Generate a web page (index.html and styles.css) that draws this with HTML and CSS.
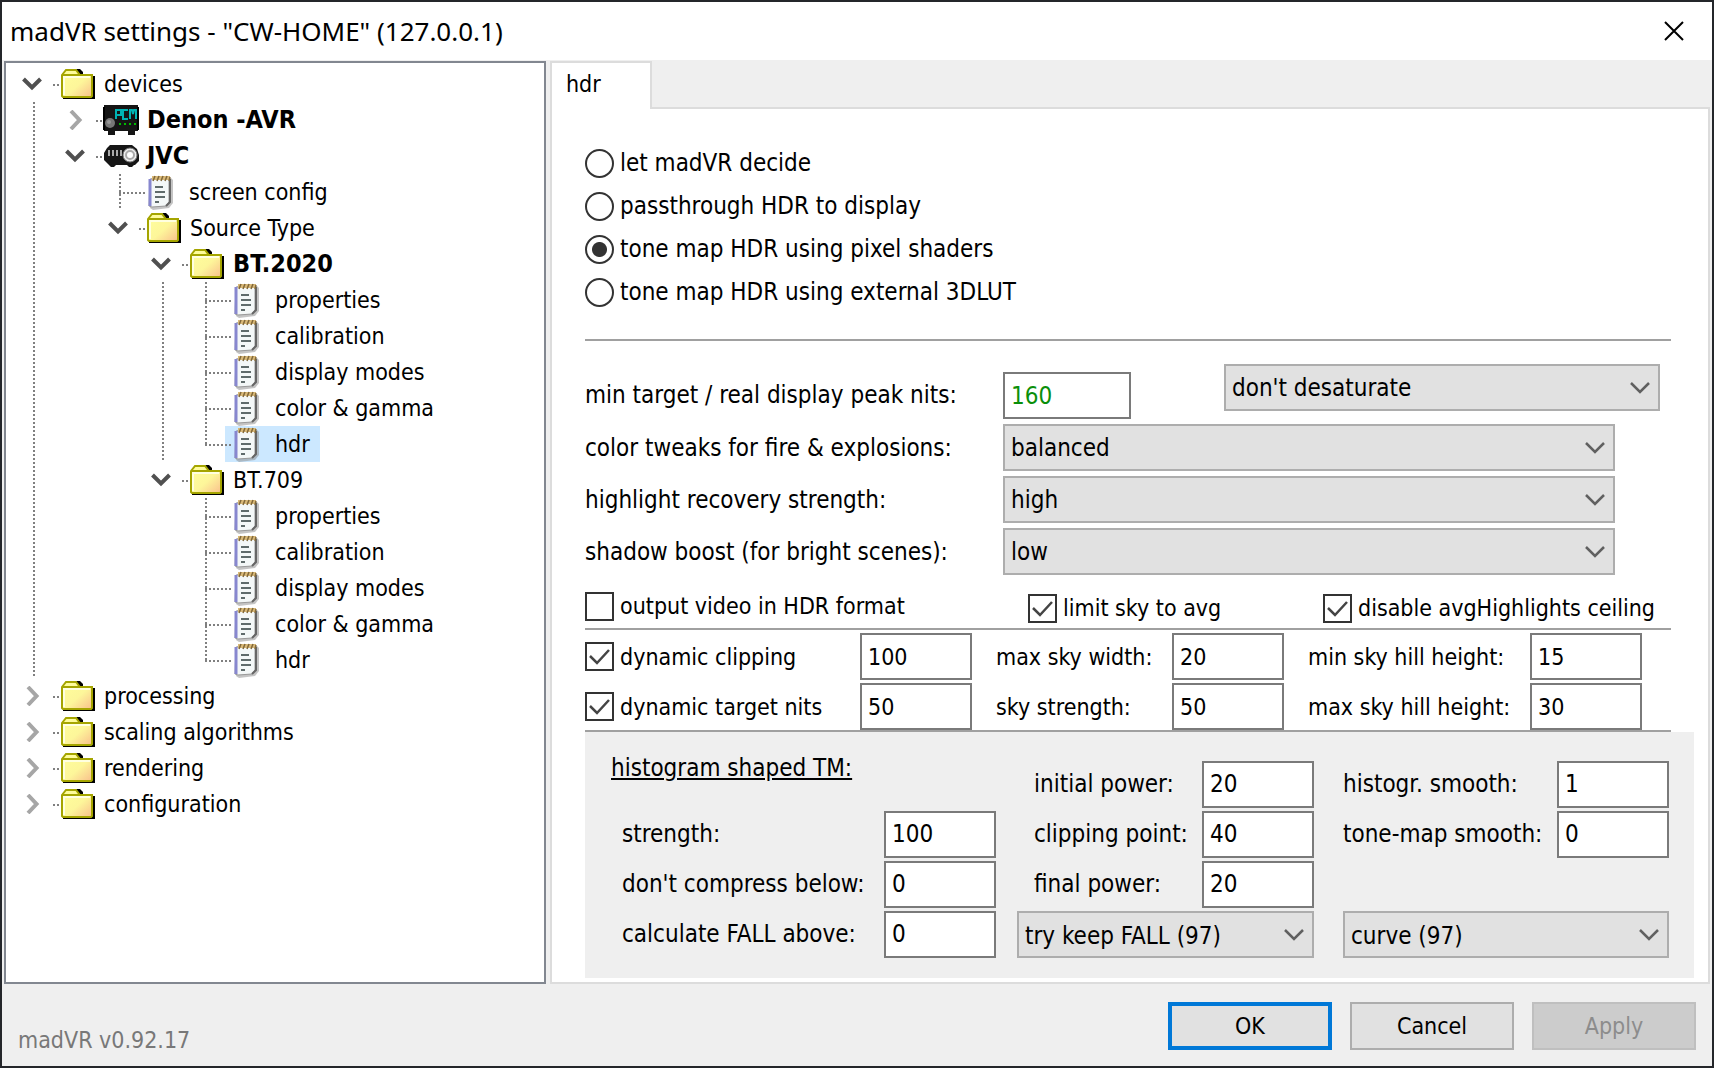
FILE: index.html
```html
<!DOCTYPE html>
<html lang="en">
  <head>
    <meta charset="UTF-8" />
    <title>madVR settings</title>
    <link rel="stylesheet" href="styles.css">
  </head>
  <body>
    <!-- icons shared by the tree -->
    <svg class="sprites" aria-hidden="true">
      <symbol id="open" viewBox="0 0 20 20">
        <path d="M1.500 5l8.500 8.500L18.500 5" fill="none" stroke="#505050" stroke-width="4" />
      </symbol>
      <symbol id="closed" viewBox="0 0 20 20">
        <path d="M6 1l8.500 9L6 19" fill="none" stroke="#a6a6a6" stroke-width="4" />
      </symbol>
      <symbol id="folder" viewBox="0 0 36 32">
        <path d="M3 31V29H32V8h3v23z" fill="#000" />
        <path d="M16 1h4l3 3v2h-4z" fill="#000" />
        <path d="M2 28V7l4-5h10l4 5h12v21l-1 1H3z" fill="url(#paper)" stroke="#a5a500" stroke-width="2" />
        <path d="M3 7h17" stroke="#a5a500" stroke-width="2" />
        <path d="M4 27V9h26" fill="none" stroke="#ffffe0" stroke-width="2" />
      </symbol>
      <symbol id="note" viewBox="0 0 28 36">
        <path d="M4 4h20l2 2v23l-4 5-16 2-3-2z" fill="#8a8a8a" opacity=".5" />
        <path d="M3 5h19v23l-3 4-14 1-3-1z" fill="#f4f8f8" stroke="#999" />
        <path d="M3 5v27" stroke="#8787cf" stroke-width="3" />
        <path d="M23 5v23l-4 4" fill="none" stroke="#666" stroke-width="2" />
        <path d="M5 4h18" stroke="#d9b978" stroke-width="4" />
        <path d="M6 7l2-5M10 7l2-5M14 7l2-5M18 7l2-5M22 7l1-4" stroke="#80683a" stroke-width="1.500" />
        <path d="M8 13h8M8 18h10M8 23h10M8 28h4" stroke="#5f6b6b" stroke-width="2" />
      </symbol>
      <symbol id="receiver" viewBox="0 0 36 32">
        <path d="M1 1h34v26h-3v4h-7v-4H12v4H5v-4H1z" fill="#151515" />
        <path d="M0 3h2v23H0zM34 3h2v23h-2z" fill="#000" />
        <circle cx="7" cy="19" r="5" fill="#777" />
        <circle cx="6" cy="18" r="2" fill="#999" />
        <path d="M13 15V6h5v5h-5M25 6h-5v9h5M27 15V6h2l1 4 1-4h2v9" fill="none" stroke="#00b3b3" stroke-width="2" />
        <path d="M16 20h2M21 20h2M26 20h2M31 20h2" stroke="#0b0" stroke-width="2" />
      </symbol>
      <symbol id="projector" viewBox="0 0 36 24">
        <path d="M4 4l3-3h22l5 4 2 6v6l-4 4h-1l-2 2h-3l-2-2H13l-2 2H8l-3-3-4-4V9z" fill="#161616" />
        <path d="M6 6v6M10 6v6M14 6v6M18 6v6" stroke="#aaa" stroke-width="2" />
        <circle cx="27" cy="11" r="7" fill="#eee" stroke="#777" />
        <circle cx="27" cy="11" r="4" fill="#fff" stroke="#aaa" stroke-width="2" />
      </symbol>
      <linearGradient id="paper" x1="0" y1="0" x2="1" y2="1">
        <stop offset="0" stop-color="#ffff9c" />
        <stop offset=".55" stop-color="#fdf69a" />
        <stop offset="1" stop-color="#f9bf8c" />
      </linearGradient>
    </svg>

    <header>
      <h1>madVR settings - "CW-HOME" (127.0.0.1)</h1>
      <button class="close" aria-label="Close">
        <svg viewBox="0 0 20 20"><path d="M1 1l18 18M19 1L1 19" stroke="#000" stroke-width="2" /></svg>
      </button>
    </header>

    <main>
      <nav class="tree">
        <ul>
          <li>
            <div class="row"><button class="twig" aria-label="Collapse devices"><svg><use href="#open" /></svg></button><a href="#" class="node"><svg><use href="#folder" /></svg>devices</a></div>
            <ul>
              <li>
                <div class="row"><button class="twig" aria-label="Expand Denon -AVR"><svg><use href="#closed" /></svg></button><a href="#" class="node device"><svg><use href="#receiver" /></svg>Denon -AVR</a></div>
              </li>
              <li>
                <div class="row"><button class="twig" aria-label="Collapse JVC"><svg><use href="#open" /></svg></button><a href="#" class="node device"><svg><use href="#projector" /></svg>JVC</a></div>
                <ul>
                  <li>
                    <div class="row leaf"><a href="#" class="node"><svg><use href="#note" /></svg>screen config</a></div>
                  </li>
                  <li>
                    <div class="row"><button class="twig" aria-label="Collapse Source Type"><svg><use href="#open" /></svg></button><a href="#" class="node"><svg><use href="#folder" /></svg>Source Type</a></div>
                    <ul>
                      <li>
                        <div class="row"><button class="twig" aria-label="Collapse BT.2020"><svg><use href="#open" /></svg></button><a href="#" class="node device"><svg><use href="#folder" /></svg>BT.2020</a></div>
                        <ul>
                          <li><div class="row leaf"><a href="#" class="node"><svg><use href="#note" /></svg>properties</a></div></li>
                          <li><div class="row leaf"><a href="#" class="node"><svg><use href="#note" /></svg>calibration</a></div></li>
                          <li><div class="row leaf"><a href="#" class="node"><svg><use href="#note" /></svg>display modes</a></div></li>
                          <li><div class="row leaf"><a href="#" class="node"><svg><use href="#note" /></svg>color &amp; gamma</a></div></li>
                          <li><div class="row leaf"><a href="#" class="node selected"><svg><use href="#note" /></svg>hdr</a></div></li>
                        </ul>
                      </li>
                      <li>
                        <div class="row"><button class="twig" aria-label="Collapse BT.709"><svg><use href="#open" /></svg></button><a href="#" class="node"><svg><use href="#folder" /></svg>BT.709</a></div>
                        <ul>
                          <li><div class="row leaf"><a href="#" class="node"><svg><use href="#note" /></svg>properties</a></div></li>
                          <li><div class="row leaf"><a href="#" class="node"><svg><use href="#note" /></svg>calibration</a></div></li>
                          <li><div class="row leaf"><a href="#" class="node"><svg><use href="#note" /></svg>display modes</a></div></li>
                          <li><div class="row leaf"><a href="#" class="node"><svg><use href="#note" /></svg>color &amp; gamma</a></div></li>
                          <li><div class="row leaf"><a href="#" class="node"><svg><use href="#note" /></svg>hdr</a></div></li>
                        </ul>
                      </li>
                    </ul>
                  </li>
                </ul>
              </li>
            </ul>
          </li>
          <li><div class="row"><button class="twig" aria-label="Expand processing"><svg><use href="#closed" /></svg></button><a href="#" class="node"><svg><use href="#folder" /></svg>processing</a></div></li>
          <li><div class="row"><button class="twig" aria-label="Expand scaling algorithms"><svg><use href="#closed" /></svg></button><a href="#" class="node"><svg><use href="#folder" /></svg>scaling algorithms</a></div></li>
          <li><div class="row"><button class="twig" aria-label="Expand rendering"><svg><use href="#closed" /></svg></button><a href="#" class="node"><svg><use href="#folder" /></svg>rendering</a></div></li>
          <li><div class="row"><button class="twig" aria-label="Expand configuration"><svg><use href="#closed" /></svg></button><a href="#" class="node"><svg><use href="#folder" /></svg>configuration</a></div></li>
        </ul>
      </nav>

      <section class="settings">
        <div class="tabs"><button class="tab">hdr</button></div>

        <form class="page" id="hdrForm">
          <div class="modes">
            <label><input type="radio" name="mode" /> let madVR decide</label>
            <label><input type="radio" name="mode" /> passthrough HDR to display</label>
            <label><input type="radio" name="mode" checked /> tone map HDR using pixel shaders</label>
            <label><input type="radio" name="mode" /> tone map HDR using external 3DLUT</label>
          </div>

          <div class="tone">
            <div class="field first">
              <label for="nits">min target / real display peak nits:</label>
              <input type="text" id="nits" value="160" />
              <select class="desaturate" aria-label="desaturation"><option>don't desaturate</option></select>
            </div>
            <div class="field">
              <label for="fire">color tweaks for fire &amp; explosions:</label>
              <select id="fire"><option>balanced</option></select>
            </div>
            <div class="field">
              <label for="recovery">highlight recovery strength:</label>
              <select id="recovery"><option>high</option></select>
            </div>
            <div class="field">
              <label for="shadow">shadow boost (for bright scenes):</label>
              <select id="shadow"><option>low</option></select>
            </div>
          </div>

          <div class="checks">
            <label><input type="checkbox" /> output video in HDR format</label>
            <label class="low"><input type="checkbox" checked /> limit sky to avg</label>
            <label class="low"><input type="checkbox" checked /> disable avgHighlights ceiling</label>
          </div>

          <div class="sky">
            <label><input type="checkbox" checked /> dynamic clipping</label>
            <input type="text" value="100" aria-label="dynamic clipping value" />
            <label for="skyWidth">max sky width:</label>
            <input type="text" id="skyWidth" value="20" />
            <label for="minHill">min sky hill height:</label>
            <input type="text" id="minHill" value="15" />

            <label><input type="checkbox" checked /> dynamic target nits</label>
            <input type="text" value="50" aria-label="dynamic target nits value" />
            <label for="skyStrength">sky strength:</label>
            <input type="text" id="skyStrength" value="50" />
            <label for="maxHill">max sky hill height:</label>
            <input type="text" id="maxHill" value="30" />
          </div>

          <div class="histogram">
            <h2>histogram shaped TM:</h2>
            <label class="mid" for="initial">initial power:</label>
            <input type="text" id="initial" value="20" />
            <label class="right" for="histoSmooth">histogr. smooth:</label>
            <input type="text" id="histoSmooth" value="1" />

            <label class="left" for="strength">strength:</label>
            <input type="text" id="strength" value="100" />
            <label class="mid" for="clip">clipping point:</label>
            <input type="text" id="clip" value="40" />
            <label class="right" for="toneSmooth">tone-map smooth:</label>
            <input type="text" id="toneSmooth" value="0" />

            <label class="left" for="compress">don't compress below:</label>
            <input type="text" id="compress" value="0" />
            <label class="mid" for="final">final power:</label>
            <input type="text" id="final" value="20" />

            <label class="left" for="fall">calculate FALL above:</label>
            <input type="text" id="fall" value="0" />
            <select class="keep" aria-label="FALL handling"><option>try keep FALL (97)</option></select>
            <select class="curve" aria-label="curve"><option>curve (97)</option></select>
          </div>
        </form>
      </section>
    </main>

    <footer>
      <span class="version">madVR v0.92.17</span>
      <button type="submit" form="hdrForm" class="btn default">OK</button>
      <button type="button" class="btn">Cancel</button>
      <button type="button" class="btn" disabled>Apply</button>
    </footer>
  </body>
</html>
```
FILE: styles.css
```css
* {
  box-sizing: border-box;
}
body {
  margin: 0;
  min-height: 100vh;
  display: flex;
  flex-direction: column;
  border: 2px solid #24262a;
  background-color: #efefef;
  color: #000;
  font-family: "DejaVu Sans Condensed", Tahoma, sans-serif;
  font-size: 23px;
  line-height: 32px;
}
button,
input,
select {
  font: inherit;
  color: inherit;
  margin: 0;
}
.sprites {
  position: absolute;
  width: 0;
  height: 0;
}

/* title bar */
header {
  display: flex;
  justify-content: space-between;
  align-items: center;
  height: 58px;
  padding: 0 22px 0 8px;
  background-color: white;
}
h1 {
  margin: 0;
  font-family: "Noto Sans", "Segoe UI", sans-serif;
  font-size: 26px;
  font-weight: normal;
}
.close {
  width: 32px;
  height: 32px;
  padding: 6px;
  border: none;
  background: none;
}
.close svg {
  display: block;
}

main {
  flex: 1;
  display: grid;
  grid-template-columns: 542fr 1160fr;
  gap: 4px;
  padding: 1px 2px 0;
}

/* tree */
.tree {
  padding-top: 3px;
  border: 2px solid #828790;
  background-color: white;
}
.tree ul {
  list-style: none;
  margin: 0;
  padding: 0;
}
.tree ul ul {
  padding-left: 43px;
}
/* dotted line down to the next sibling */
.tree li:not(:last-child) > ul {
  background: repeating-linear-gradient(#808080 0 2px, transparent 2px 4px) 27px 0 / 2px 100% no-repeat;
}
.row {
  display: flex;
  align-items: center;
  height: 36px;
}
.twig {
  flex: none;
  width: 47px;
  height: 36px;
  padding: 0 11px 0 16px;
  border: none;
  background: none;
}
.twig svg {
  display: block;
  width: 20px;
  height: 20px;
}
.node {
  display: flex;
  align-items: center;
  height: 36px;
  padding: 0 10px 0 7px;
  background: repeating-linear-gradient(90deg, #808080 0 2px, transparent 2px 4px) 0 18px / 7px 2px no-repeat;
  color: #000;
  text-decoration: none;
  white-space: nowrap;
}
.node svg {
  flex: none;
  width: 36px;
  height: 32px;
  margin-right: 8px;
}
.leaf {
  padding-left: 47px;
  background:
    repeating-linear-gradient(#808080 0 2px, transparent 2px 4px) 27px 0 / 2px 100% no-repeat,
    repeating-linear-gradient(90deg, #808080 0 2px, transparent 2px 4px) 27px 18px / 20px 2px no-repeat;
}
li:last-child > .leaf {
  background-size: 2px 18px, 20px 2px;
}
.leaf .node svg {
  width: 28px;
  height: 36px;
  margin: 0 14px 0 8px;
}
.leaf .node {
  padding-left: 0;
}
.device {
  font-size: 25px;
  font-weight: bold;
}
.selected {
  background-color: #cce8ff;
}

/* tab control */
.settings {
  display: flex;
  flex-direction: column;
}
.tabs {
  display: flex;
  height: 46px;
}
.tab {
  width: 102px;
  margin-bottom: -2px;
  padding: 0 14px 4px;
  border: 2px solid #dcdcdc;
  border-bottom: none;
  background-color: white;
  text-align: left;
  z-index: 1;
}
.page {
  flex: 1;
  padding: 38px 14px 4px 33px;
  border: 2px solid #dcdcdc;
  background-color: white;
}
.page label {
  white-space: nowrap;
}

input[type="text"],
select {
  appearance: none;
  width: 100%;
  min-width: 0;
  height: 47px;
  padding: 0 6px;
  border: 2px solid #7a7a7a;
  border-radius: 0;
  background-color: white;
}
select {
  border-color: #adadad;
  background: #e1e1e1 url('data:image/svg+xml,<svg xmlns="http://www.w3.org/2000/svg" width="20" height="14"><path d="M1 2l9 9 9-9" fill="none" stroke="%23606060" stroke-width="2.500"/></svg>') right 8px center no-repeat;
}
input[type="radio"],
input[type="checkbox"] {
  appearance: none;
  flex: none;
  width: 29px;
  height: 29px;
  margin-right: 6px;
  border: 2px solid #333;
  background-color: white;
}
input[type="radio"] {
  border-radius: 50%;
}
input[type="radio"]:checked {
  background-image: radial-gradient(circle, #333 7px, transparent 8px);
}
input[type="checkbox"]:checked {
  background: white url('data:image/svg+xml,<svg xmlns="http://www.w3.org/2000/svg" width="25" height="25"><path d="M3 12l7 7L22 6" fill="none" stroke="%23444" stroke-width="2.500"/></svg>') center no-repeat;
}

.modes,
.tone,
.histogram {
  font-size: 24px;
}
.modes {
  display: grid;
  gap: 11px;
  margin-right: 23px;
  padding-bottom: 31px;
  border-bottom: 2px solid #a0a0a0;
}
.modes label,
.checks label,
.sky label {
  display: flex;
  align-items: center;
}
.modes label {
  justify-self: start;
}

.tone {
  display: grid;
  gap: 5px;
  padding: 23px 23px 15px 0;
}
.field {
  display: flex;
  align-items: center;
  margin-right: 56px;
}
.field label {
  flex: none;
  width: 418px;
}
.first {
  align-items: flex-end;
  margin-right: 11px;
}
.first label {
  line-height: 47px;
}
.field #nits {
  width: 128px;
  color: #0a8f0a;
}
.desaturate {
  width: 436px;
  margin: 0 0 8px auto;
}

.checks {
  display: grid;
  grid-template-columns: 443fr 295fr 348fr;
  align-items: start;
  margin-right: 23px;
  padding-bottom: 4px;
  border-bottom: 2px solid #a0a0a0;
}
.checks .low {
  padding-top: 2px;
}
.sky {
  display: grid;
  grid-template-columns: 275fr 112fr 200fr 112fr 246fr 112fr;
  gap: 3px 0;
  margin-right: 23px;
  padding: 3px 29px 0 0;
  border-bottom: 2px solid #a0a0a0;
}
.sky label[for] {
  padding-left: 24px;
}

.histogram {
  display: grid;
  grid-template-columns: 299fr 112fr 206fr 112fr 243fr 112fr;
  grid-template-rows: 56px;
  gap: 3px 0;
  align-items: end;
  padding: 20px 25px 20px 0;
  background-color: #efefef;
  line-height: 47px;
}
.histogram h2 {
  grid-column: span 2;
  align-self: start;
  margin: 0 0 0 26px;
  font-size: 24px;
  font-weight: normal;
  line-height: 32px;
  text-decoration: underline;
}
.left {
  grid-column: 1;
  padding-left: 37px;
}
.mid {
  padding-left: 38px;
}
.right {
  padding-left: 29px;
}
.keep {
  grid-column: 3 / span 2;
  justify-self: end;
  width: 297px;
}
.curve {
  grid-column: 5 / span 2;
  justify-self: end;
  width: 326px;
}

/* bottom bar */
footer {
  display: flex;
  gap: 18px;
  padding: 18px 16px 8px;
}
.version {
  margin-right: auto;
  padding-top: 20px;
  line-height: 36px;
  color: #787878;
}
.btn {
  width: 164px;
  height: 48px;
  border: 2px solid #adadad;
  background-color: #e1e1e1;
}
.default {
  border: 4px solid #0078d7;
}
.btn:disabled {
  border-color: #bfbfbf;
  background-color: #ccc;
  color: #8c8c8c;
}
```
